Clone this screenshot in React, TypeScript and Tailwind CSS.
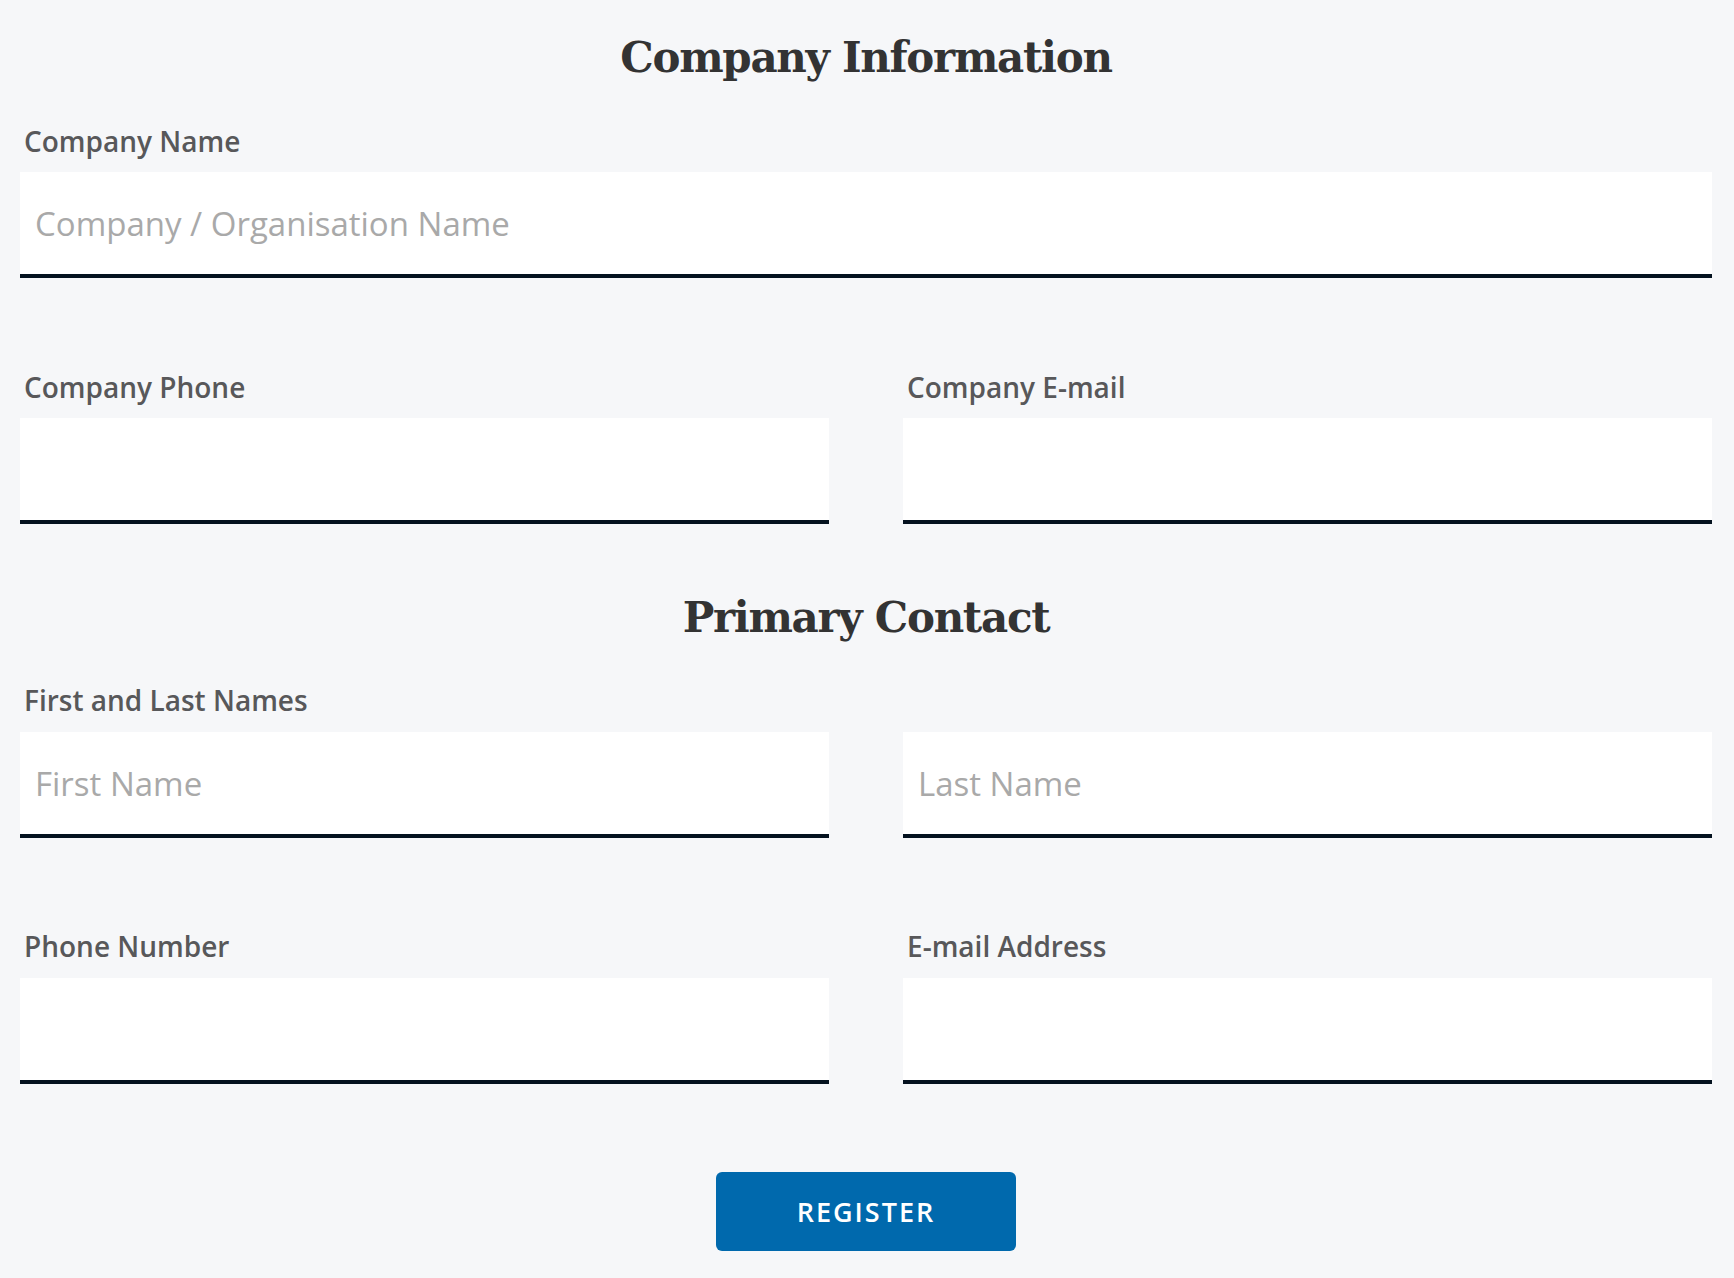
import React from 'react';

function Field({ label, placeholder, gap = 'mb-[17px]' }: { label?: string; placeholder?: string; gap?: string }) {
  return (
    <div className="flex flex-col">
      <label className={`block h-[28px] ${gap} pl-[4px] text-[28px] leading-none font-semibold text-[#58585a] whitespace-nowrap`}>
        {label ?? '\u00a0'}
      </label>
      <input
        type="text"
        placeholder={placeholder}
        className="block w-full h-[106px] bg-white border-0 border-b-4 border-[#04121f] pl-[15px] text-[33px] text-[#333] outline-none placeholder:text-[#a9a9a9]"
      />
    </div>
  );
}

export default function App() {
  return (
    <div className="min-h-screen bg-[#f6f7f9] pl-[20px] pr-[22px] pt-[37px] font-['Open_Sans',sans-serif]">
      <h1 className="h-[43px] mb-[47px] text-center text-[42px] tracking-[-1.3px] leading-none font-bold text-[#333333] font-['DejaVu_Serif',serif]">
        Company Information
      </h1>

      <Field label="Company Name" placeholder="Company / Organisation Name" />

      <div className="mt-[95px] grid grid-cols-2 gap-x-[74px]">
        <Field label="Company Phone" />
        <Field label="Company E-mail" />
      </div>

      <h2 className="mt-[73px] h-[43px] mb-[46px] text-center text-[42px] tracking-[-1.3px] leading-none font-bold text-[#333333] font-['DejaVu_Serif',serif]">
        Primary Contact
      </h2>

      <div className="grid grid-cols-2 gap-x-[74px]">
        <Field label="First and Last Names" placeholder="First Name" gap="mb-[18px]" />
        <div className="flex flex-col justify-end">
          <input
            type="text"
            placeholder="Last Name"
            className="block w-full h-[106px] bg-white border-0 border-b-4 border-[#04121f] pl-[15px] text-[33px] text-[#333] outline-none placeholder:text-[#a9a9a9]"
          />
        </div>
      </div>

      <div className="mt-[94px] grid grid-cols-2 gap-x-[74px]">
        <Field label="Phone Number" gap="mb-[18px]" />
        <Field label="E-mail Address" gap="mb-[18px]" />
      </div>

      <div className="mt-[88px] pb-[27px] flex justify-center">
        <button
          type="button"
          className="w-[300px] h-[79px] rounded-[6px] bg-[#0069ad] text-white text-[27px] font-semibold tracking-[2px] leading-none"
        >
          REGISTER
        </button>
      </div>
    </div>
  );
}
